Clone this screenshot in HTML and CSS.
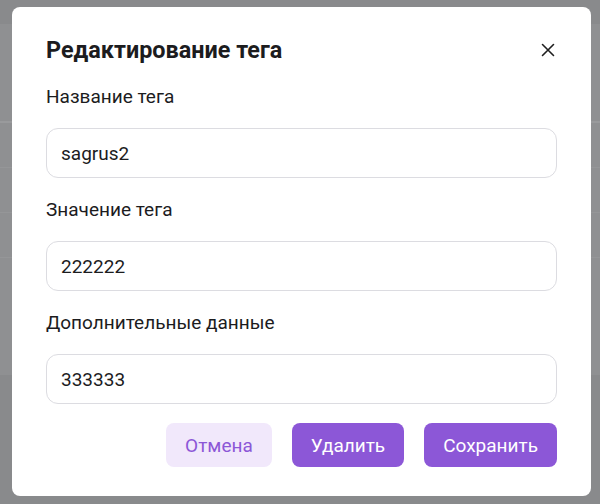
FILE: index.html
```html
<!DOCTYPE html>
<html lang="ru">
<head>
    <meta charset="UTF-8">
    <meta name="viewport" content="width=device-width, initial-scale=1.0">
    <title>Редактирование тега</title>
    <link rel="stylesheet" href="styles.css">
</head>
<body>
    <div class="backdrop">
        <div class="modal">
            <div class="modal-header">
                <h2 class="modal-title">Редактирование тега</h2>
                <button class="modal-close" aria-label="Закрыть">
                    <svg width="14" height="14" viewBox="0 0 14 14">
                        <path d="M1.5 1.5 L12.5 12.5 M12.5 1.5 L1.5 12.5" stroke="#1f1f1f" stroke-width="1.6" stroke-linecap="round" fill="none"/>
                    </svg>
                </button>
            </div>

            <div class="form-group">
                <label for="name">Название тега</label>
                <input type="text" id="name" value="sagrus2">
            </div>

            <div class="form-group">
                <label for="value">Значение тега</label>
                <input type="text" id="value" value="222222">
            </div>

            <div class="form-group">
                <label for="extra">Дополнительные данные</label>
                <input type="text" id="extra" value="333333">
            </div>

            <div class="modal-actions">
                <button class="btn btn-light">Отмена</button>
                <button class="btn btn-primary">Удалить</button>
                <button class="btn btn-primary">Сохранить</button>
            </div>
        </div>
    </div>
</body>
</html>
```

FILE: styles.css
```css
:root {
    --primary-color: #8c57d7;
    --primary-light: #f1e8fb;
    --text-color: #1c1c1e;
    --border-color: #dcdce1;
    --overlay-dark: #898a8c;
    --overlay-light: #8f9092;
}

* {
    box-sizing: border-box;
}

body {
    margin: 0;
    font-family: Roboto, "Noto Sans", Arial, sans-serif;
    color: var(--text-color);
}

.backdrop {
    min-height: 504px;
    padding: 7px 9px 8px 12px;
    background:
        linear-gradient(to bottom,
            transparent 0, transparent 121px,
            #999a9c 121px, #999a9c 123px,
            transparent 123px, transparent 167px,
            #959698 167px, #959698 168px,
            transparent 168px, transparent 212px,
            #959698 212px, #959698 213px,
            transparent 213px, transparent 257px,
            #959698 257px, #959698 258px,
            transparent 258px),
        linear-gradient(to bottom,
            var(--overlay-dark) 0, var(--overlay-dark) 24px,
            var(--overlay-light) 24px, var(--overlay-light) 375px,
            var(--overlay-dark) 375px);
}

.modal {
    width: 579px;
    background: white;
    border-radius: 8px;
    padding: 28px 34px 29px;
}

.modal-header {
    display: flex;
    align-items: center;
    justify-content: space-between;
    margin-bottom: 20px;
}

.modal-title {
    margin: 0;
    font-size: 23.4px;
    line-height: 30px;
    font-weight: 700;
}

.modal-close {
    display: flex;
    padding: 0;
    margin-right: 2px;
    border: none;
    background: none;
    cursor: pointer;
}

.form-group {
    display: flex;
    flex-direction: column;
    margin-bottom: 20px;
}

label {
    font-size: 19px;
    line-height: 24px;
    margin-bottom: 19px;
}

input {
    height: 50px;
    padding: 0 14px;
    border: 1px solid var(--border-color);
    border-radius: 12px;
    font-family: inherit;
    font-size: 19px;
    color: var(--text-color);
    outline: none;
}

.modal-actions {
    display: flex;
    justify-content: flex-end;
    gap: 20px;
    margin-top: -1px;
}

.btn {
    height: 44px;
    padding: 0 19px;
    border: none;
    border-radius: 8px;
    font-family: inherit;
    font-size: 19px;
    font-weight: 400;
    cursor: pointer;
}

.btn-light {
    background: var(--primary-light);
    color: var(--primary-color);
}

.btn-primary {
    background: var(--primary-color);
    color: white;
}
```
